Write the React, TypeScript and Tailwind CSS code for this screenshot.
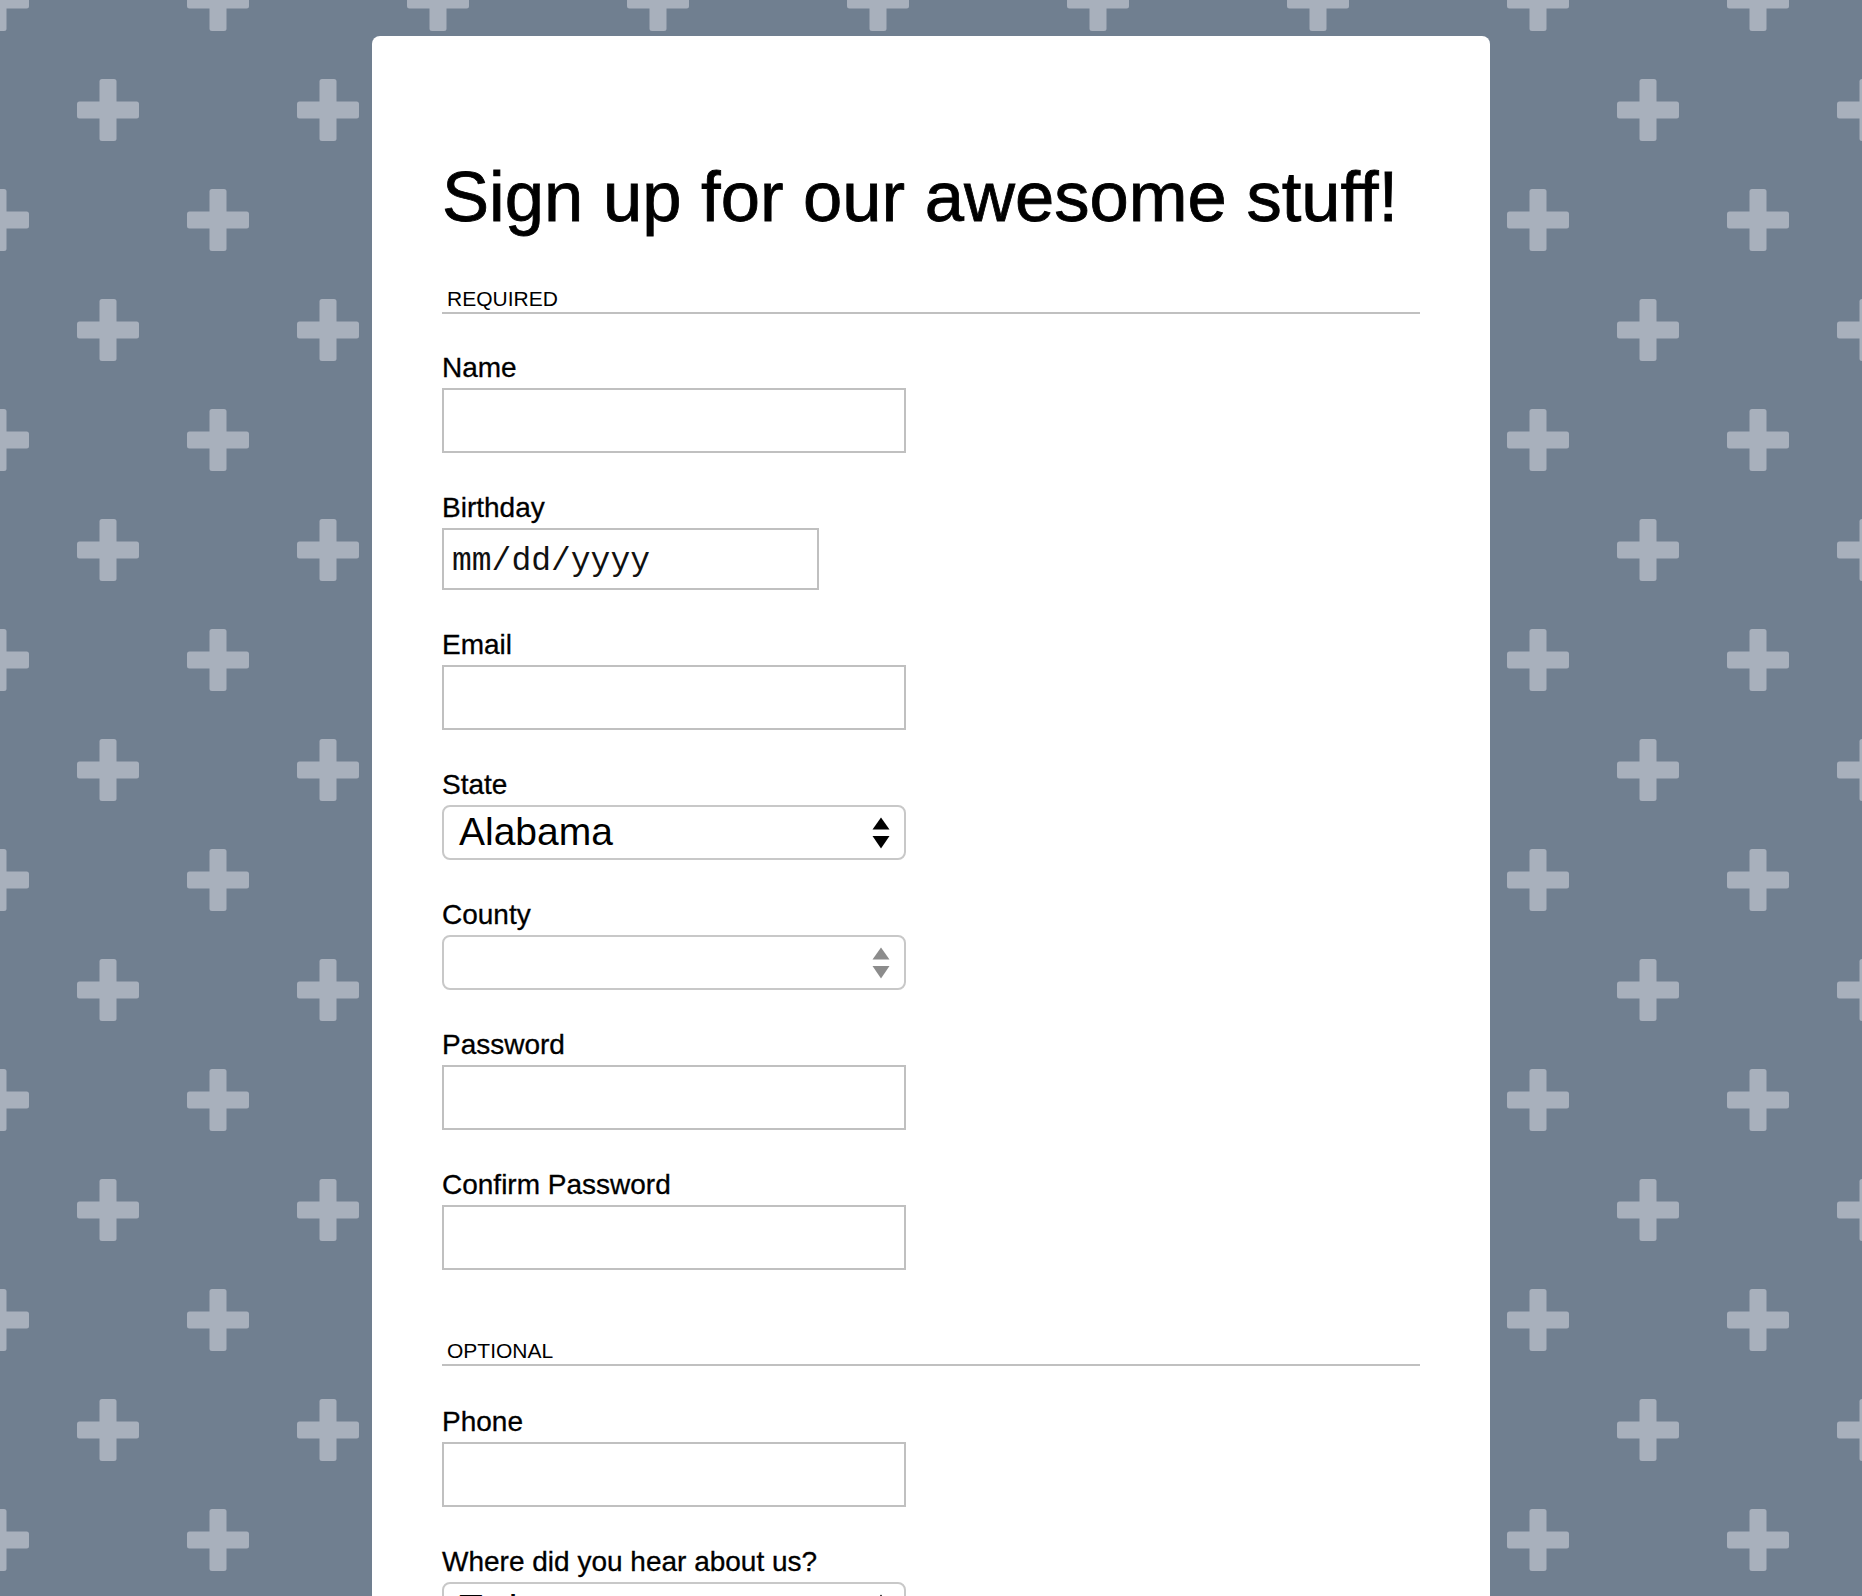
import React from "react";

function Cross({ cx, cy }: { cx: number; cy: number }) {
  return (
    <g>
      <rect x={cx - 31} y={cy - 8.5} width={62} height={17} rx={2.5} />
      <rect x={cx - 8.5} y={cy - 31} width={17} height={62} rx={2.5} />
    </g>
  );
}

function Arrows({ color }: { color: string }) {
  return (
    <svg width="18" height="32" viewBox="0 0 18 32" className="shrink-0">
      <path d="M0.5 12.5 L9 0.5 L17.5 12.5 Z" fill={color} />
      <path d="M0.5 19 L17.5 19 L9 31.5 Z" fill={color} />
    </svg>
  );
}

function Label({ children }: { children: React.ReactNode }) {
  return (
    <label className="block text-[28px] leading-[41px] text-black [-webkit-text-stroke:0.3px_black]">
      {children}
    </label>
  );
}

function TextField({ label, type = "text" }: { label: string; type?: string }) {
  return (
    <div className="flex flex-col">
      <Label>{label}</Label>
      <input
        type={type}
        className="h-[65px] w-[464px] border-2 border-[#c0c0c0] bg-white outline-none"
      />
    </div>
  );
}

function SelectField({ label, value, arrowColor }: { label: string; value: string; arrowColor: string }) {
  return (
    <div className="flex flex-col">
      <Label>{label}</Label>
      <div className="flex h-[55px] w-[464px] items-center justify-between rounded-[8px] border-2 border-[#c8c8c8] bg-white pl-[15px] pr-[14px]">
        <span className="text-[39px] text-black">{value}</span>
        <Arrows color={arrowColor} />
      </div>
    </div>
  );
}

function SectionHeader({ children, className }: { children: React.ReactNode; className: string }) {
  return (
    <div className={"border-b-2 border-[#c0c0c0] pb-px pl-[5px] text-[21px] leading-[24px] text-black " + className}>
      {children}
    </div>
  );
}

export default function App() {
  const crosses = [
    [0, 0],
    [220, 0],
    [0, 220],
    [220, 220],
    [110, 110],
  ];
  return (
    <div className="relative h-screen overflow-hidden bg-[#707f90] font-['Liberation_Sans',Arial,sans-serif]">
      <svg className="absolute inset-0 h-full w-full">
        <defs>
          <pattern id="crosses" x="-2" y="0" width="220" height="220" patternUnits="userSpaceOnUse">
            <g fill="#a8b0bc">
              {crosses.map(([x, y], i) => (
                <Cross key={i} cx={x} cy={y} />
              ))}
            </g>
          </pattern>
        </defs>
        <rect width="100%" height="100%" fill="url(#crosses)" />
      </svg>

      <div className="relative mx-auto mt-[36px] min-h-[1700px] w-[1118px] rounded-t-[8px] bg-white px-[70px] pt-[126px]">
        <h1 className="text-[70.6px] leading-[70px] text-black [-webkit-text-stroke:0.8px_black]">
          Sign up for our awesome stuff!
        </h1>

        <SectionHeader className="mt-[55px]">REQUIRED</SectionHeader>

        <div className="mt-[33px] flex flex-col gap-[34px]">
          <TextField label="Name" />
          <div className="flex flex-col">
            <Label>Birthday</Label>
            <div className="flex h-[62px] w-[377px] items-center border-2 border-[#c0c0c0] bg-white pl-[8px] pt-[5px]">
              <span className="font-['Liberation_Mono','Courier_New',monospace] text-[33px] text-[#111]">mm/dd/yyyy</span>
            </div>
          </div>
          <TextField label="Email" type="email" />
          <SelectField label="State" value="Alabama" arrowColor="#000000" />
          <SelectField label="County" value="" arrowColor="#8c8c8c" />
          <TextField label="Password" type="password" />
          <TextField label="Confirm Password" type="password" />
        </div>

        <SectionHeader className="mt-[69px]">OPTIONAL</SectionHeader>

        <div className="mt-[35px] flex flex-col gap-[34px]">
          <TextField label="Phone" type="tel" />
          <SelectField label="Where did you hear about us?" value="Twitter" arrowColor="#000000" />
        </div>
      </div>
    </div>
  );
}
